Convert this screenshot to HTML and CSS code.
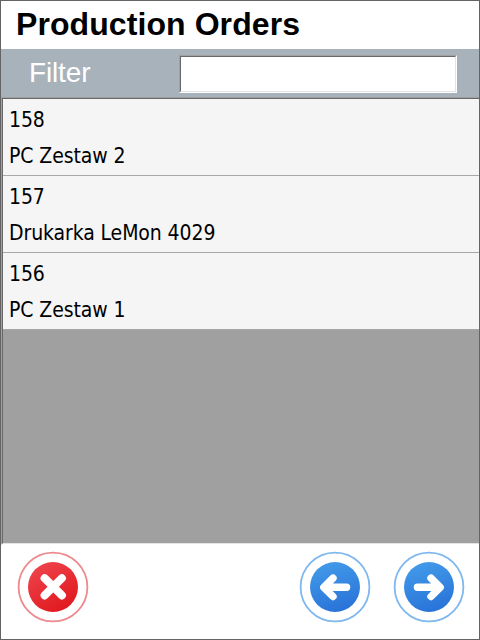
FILE: index.html
```html
<!DOCTYPE html>
<html lang="en">
<head>
<meta charset="utf-8">
<title>Production Orders</title>
<link rel="stylesheet" href="styles.css">
</head>
<body>
<main class="window">
  <h1 class="title">Production Orders</h1>
  <div class="filter-bar">
    <label class="filter-label" for="filter">Filter</label>
    <span class="field"><input class="field-input" id="filter" type="text"></span>
  </div>
  <div class="list-frame">
    <ul class="list">
      <li class="row"><span>158</span><span>PC Zestaw 2</span></li>
      <li class="row"><span>157</span><span>Drukarka LeMon 4029</span></li>
      <li class="row"><span>156</span><span>PC Zestaw 1</span></li>
    </ul>
  </div>
  <footer class="actions">
    <button class="action action-cancel" aria-label="Cancel">
      <svg width="72" height="72" viewBox="-36 -36 72 72">
        <defs><linearGradient id="red" x1="0.2" y1="0" x2="0.8" y2="1"><stop offset="0" stop-color="#ef444d"/><stop offset="1" stop-color="#df161c"/></linearGradient></defs>
        <circle r="34.4" fill="#fff" stroke="#ee8a8e" stroke-width="1.8"/>
        <circle r="25" fill="url(#red)"/>
        <path d="M-8.4-8.8L8.9 8.4M8.9-8.8L-8.4 8.4" stroke="#fff" stroke-width="8" stroke-linecap="round"/>
      </svg>
    </button>
    <button class="action" aria-label="Previous">
      <svg width="72" height="72" viewBox="-36 -36 72 72">
        <defs><linearGradient id="blue" x1="0.35" y1="0" x2="0.65" y2="1"><stop offset="0" stop-color="#429ae8"/><stop offset="1" stop-color="#2872d8"/></linearGradient></defs>
        <circle r="34.4" fill="#fff" stroke="#7fb8ee" stroke-width="1.8"/>
        <circle r="25" fill="url(#blue)"/>
        <path d="M11.6 0.3H-10M-2-8.9L-11.2 0.3L-2 9.5" fill="none" stroke="#fff" stroke-width="7.4" stroke-linecap="round" stroke-linejoin="round"/>
      </svg>
    </button>
    <button class="action" aria-label="Next">
      <svg width="72" height="72" viewBox="-36 -36 72 72">
        <circle r="34.4" fill="#fff" stroke="#7fb8ee" stroke-width="1.8"/>
        <circle r="25" fill="url(#blue)"/>
        <path d="M-11.6 0.3H10M2-8.9L11.2 0.3L2 9.5" fill="none" stroke="#fff" stroke-width="7.4" stroke-linecap="round" stroke-linejoin="round"/>
      </svg>
    </button>
  </footer>
</main>
</body>
</html>
```
FILE: styles.css
```css
* { box-sizing: border-box; }
body { margin: 0; }
.window {
  display: flex;
  flex-direction: column;
  width: 480px;
  height: 640px;
  border: 1px solid #646464;
  background: #fff;
  font-family: "Liberation Sans", Arial, sans-serif;
}
.title {
  height: 48px;
  margin: 0;
  padding-left: 15px;
  font-size: 32px;
  line-height: 46px;
  letter-spacing: 0.08px;
  color: #000;
}
.filter-bar {
  display: flex;
  height: 48px;
  padding: 6px 22px 0 28px;
  background: #a8b2ba;
}
.filter-label {
  width: 150px;
  font-size: 28px;
  line-height: 36px;
  letter-spacing: -0.15px;
  color: #fff;
}
.field {
  width: 278px;
  height: 38px;
  border: 1px solid;
  border-color: #a0a0a0 #fff #fff #a0a0a0;
}
.field-input {
  display: block;
  width: 100%;
  height: 100%;
  border: 1px solid;
  border-color: #696969 #e3e3e3 #e3e3e3 #696969;
  outline: none;
  background: #fff;
  font-size: 24px;
}
.list-frame {
  height: 448px;
  border: solid #a0a0a0;
  border-width: 1px 0 0 1px;
  border-bottom: 1px solid #fff;
}
.list {
  height: 446px;
  margin: 0;
  padding: 0;
  border: solid #696969;
  border-width: 1px 0 0 1px;
  border-bottom: 1px solid #e3e3e3;
  background: #a0a0a0;
  list-style: none;
}
.row {
  display: flex;
  flex-direction: column;
  height: 77px;
  padding: 3px 0 0 6px;
  border-bottom: 1px solid #a8a8a8;
  background: #f5f5f5;
  font-family: "DejaVu Sans Condensed", "DejaVu Sans", Tahoma, sans-serif;
  font-stretch: condensed;
  font-size: 21px;
  line-height: 36px;
  letter-spacing: -0.09px;
  color: #000;
}
.actions {
  display: flex;
  padding: 6px 0 0 16px;
}
.action {
  width: 72px;
  height: 72px;
  margin-right: 22px;
  padding: 0;
  border: 0;
  background: none;
}
.action svg { display: block; }
.action-cancel { margin-right: 210px; }
```
